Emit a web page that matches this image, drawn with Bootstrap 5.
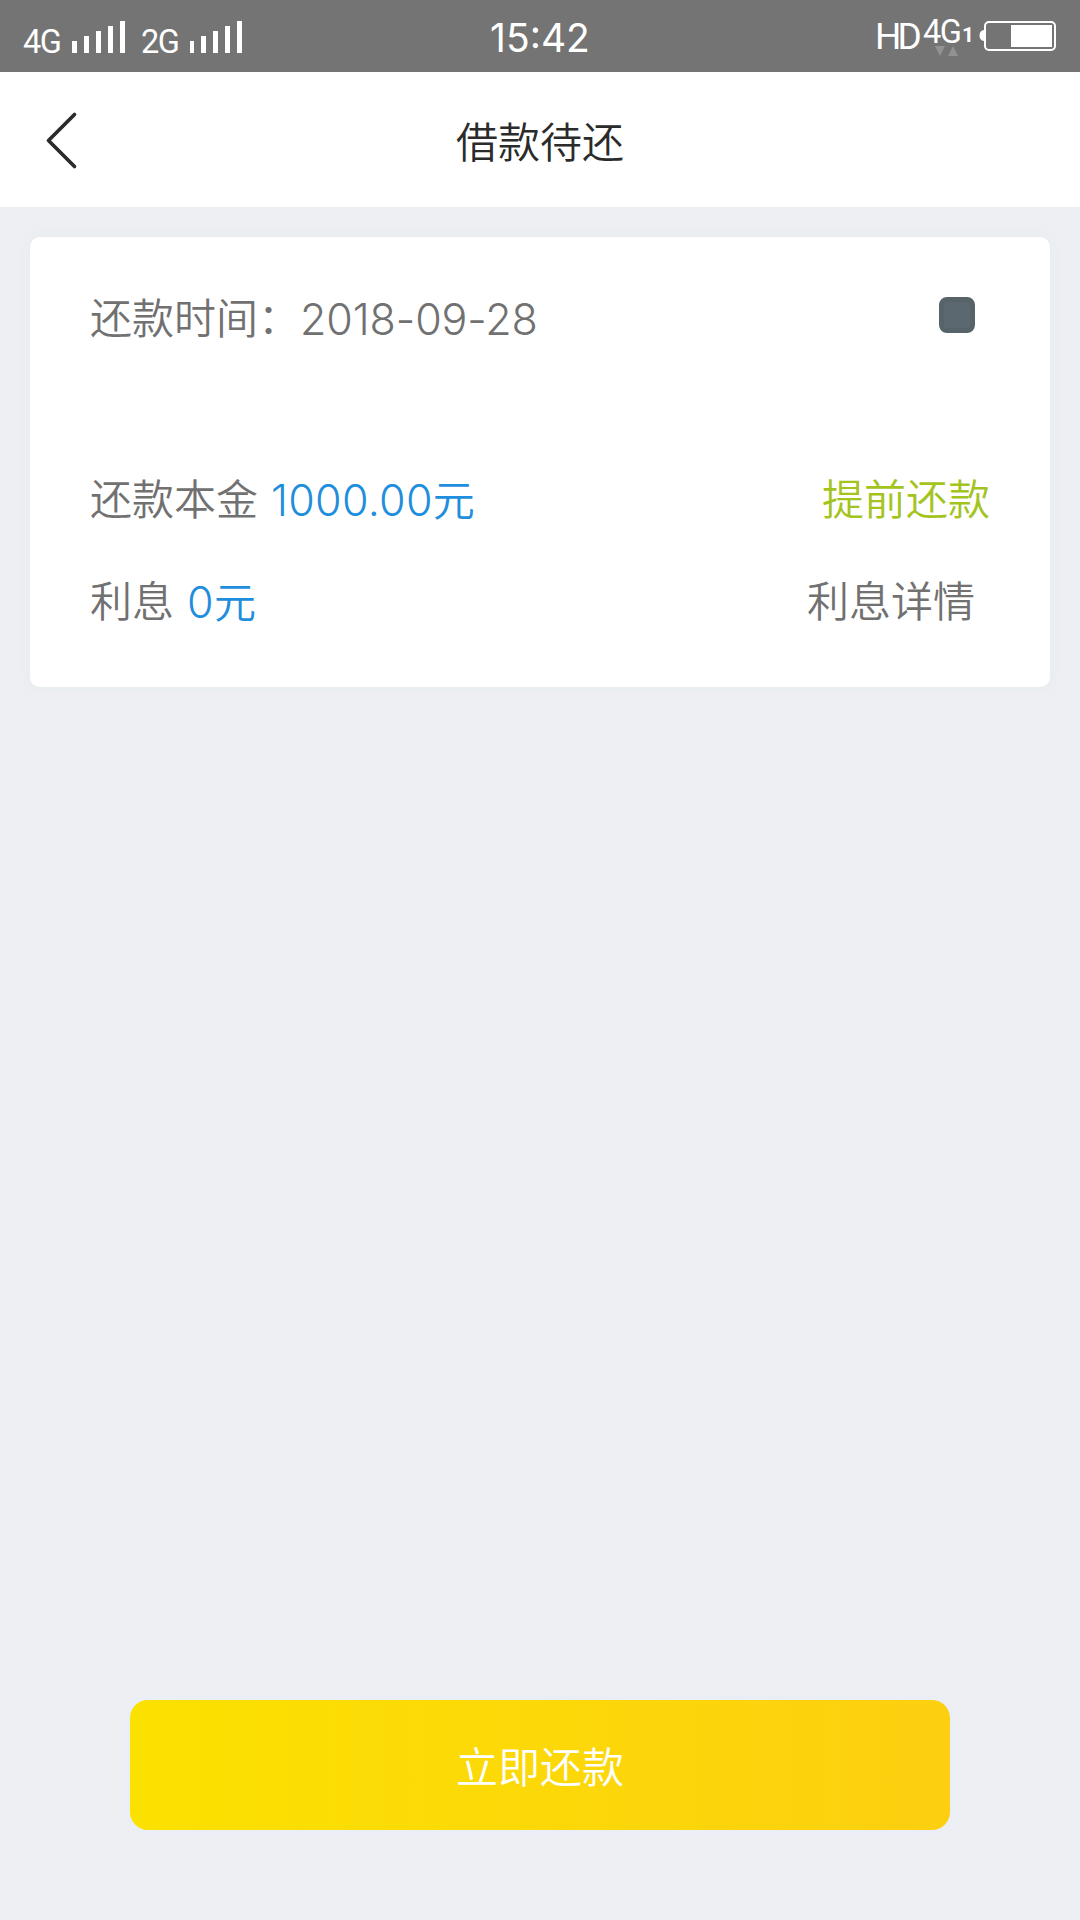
<!DOCTYPE html>
<html lang="zh-CN">
<head>
<meta charset="utf-8">
<meta name="viewport" content="width=device-width, initial-scale=1">
<title>借款待还</title>
<link rel="stylesheet" href="https://cdn.jsdelivr.net/npm/bootstrap@5.3.0/dist/css/bootstrap.min.css">
<style>
body { background: #edeff3; font-family: Inter, "Noto Sans CJK SC", sans-serif; font-weight: 350; font-size: 42px; line-height: 60px; color: #717171; }
.screen { width: 1080px; height: 1920px; }
.status { height: 72px; background: #747474; color: #fff; line-height: 40px; white-space: nowrap; }
.status svg, .topbar svg { display: block; flex: none; }
.side { flex: 1 1 0; }
.side-left { padding-left: 23px; }
.net { font: 400 32.5px/40px Roboto, sans-serif; letter-spacing: -1.5px; }
.net-left { width: 49px; padding-top: 22px; }
.clock { font-size: 39px; font-weight: 400; padding: 18px 0 0 1px; }
.hd { font: 400 37px/40px Roboto, sans-serif; letter-spacing: -4px; width: 48px; padding-top: 17px; }
.net-right { width: 39px; padding-top: 12px; }
.sim { font: 700 21px/26px Roboto, sans-serif; width: 16px; padding-top: 22px; }
.arrows { left: 12px; top: 46px; }
.topbar { height: 135px; background: #fff; color: #2b2b2b; }
.title { padding-top: 6px; }
.back { width: 120px; padding-left: 44px; }
.loan { margin: 30px 30px 0; height: 450px; border: 0; border-radius: 10px; color: inherit; padding: 52px 60px 0; box-shadow: 0 0 10px rgba(220,235,232,.5); }
.line-two { margin-top: 121px; }
.line-three { margin-top: 41px; }
.date { font-size: 43px; letter-spacing: -.1px; }
.amount { color: #1f8edc; margin-left: 13px; }
.num { font-size: 43px; letter-spacing: .3px; }
.early { color: #a3c31d; }
.detail { margin-right: 15px; }
.check { width: 36px; height: 36px; border-radius: 8px; background: #5b686f; border: 5px solid #56646a; margin: 8px 15px 0 0; }
.pay { width: 820px; height: 130px; border: 0; border-radius: 18px; background: linear-gradient(90deg, #fbe100, #fdcf10); color: #fff; font-size: 42px; font-weight: 350; margin: 0 auto 90px; box-shadow: 0 0 9px #e6edfb; padding: 5px 0 0; }
</style>
<script src="https://cdn.jsdelivr.net/npm/bootstrap@5.3.0/dist/js/bootstrap.bundle.min.js"></script>
</head>
<body>
<main class="screen d-flex flex-column overflow-hidden">
  <div class="status d-flex">
    <div class="side side-left d-flex">
      <span class="net net-left">4G</span>
      <svg width="69" height="72" fill="#fff"><path d="M0 41h5v12H0zM12 36h5v17h-5zM24 31h5v22h-5zM36 26h5v27h-5zM48 21h5v32h-5z"/></svg>
      <span class="net net-left">2G</span>
      <svg width="53" height="72" fill="#fff"><path d="M-1 41h5v12H-1zM11 36h5v17h-5zM23 31h5v22h-5zM35 26h5v27h-5zM47 21h5v32h-5z"/></svg>
    </div>
    <span class="clock">15:42</span>
    <div class="side d-flex justify-content-end pe-4">
      <span class="hd">HD</span>
      <span class="net net-right position-relative">4G
        <svg class="arrows position-absolute" width="24" height="11" fill="#929292"><path d="M0 0h10L5 10zM13 10h10L18 0z"/></svg>
      </span>
      <span class="sim">1</span>
      <svg width="78" height="72" fill="#fff"><path d="M6 30v11c-6 0-6-11 0-11z"/><rect x="7" y="22" width="70" height="28" rx="4" fill="none" stroke="#fff" stroke-width="2"/><path d="M33 25h41v22H33z"/></svg>
    </div>
  </div>
  <header class="topbar d-flex align-items-center justify-content-between">
    <div class="back"><svg width="34" height="60" fill="none" stroke="#2b2b2b" stroke-width="3.7" stroke-linecap="round" stroke-linejoin="round"><path d="M30.500 4.500L4.500 30.500L30.500 56.500"/></svg></div>
    <span class="title">借款待还</span>
    <div class="back"></div>
  </header>
  <section class="card loan">
    <div class="d-flex justify-content-between align-items-start">
      <div class="d-flex"><span>还款时间：</span><span class="date">2018-09-28</span></div>
      <span class="check"></span>
    </div>
    <div class="line-two d-flex justify-content-between">
      <div class="d-flex"><span>还款本金</span><span class="amount"><span class="num">1000.00</span>元</span></div>
      <span class="early">提前还款</span>
    </div>
    <div class="line-three d-flex justify-content-between">
      <div class="d-flex"><span>利息</span><span class="amount"><span class="num">0</span>元</span></div>
      <span class="detail">利息详情</span>
    </div>
  </section>
  <button type="button" class="btn pay mt-auto">立即还款</button>
</main>
</body>
</html>
